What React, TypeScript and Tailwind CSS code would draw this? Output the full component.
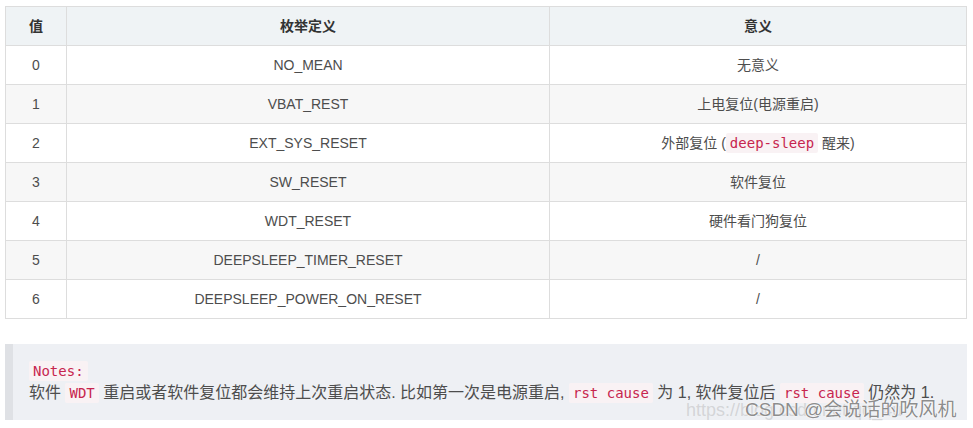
const rows = [
  { v: '0', name: 'NO_MEAN', desc: <>无意义</> },
  { v: '1', name: 'VBAT_REST', desc: <>上电复位(电源重启)</> },
  {
    v: '2',
    name: 'EXT_SYS_RESET',
    desc: (
      <>
        外部复位 (<Code>deep-sleep</Code> 醒来)
      </>
    ),
  },
  { v: '3', name: 'SW_RESET', desc: <>软件复位</> },
  { v: '4', name: 'WDT_RESET', desc: <>硬件看门狗复位</> },
  { v: '5', name: 'DEEPSLEEP_TIMER_RESET', desc: <>/</> },
  { v: '6', name: 'DEEPSLEEP_POWER_ON_RESET', desc: <>/</> },
];

function Code({ children }: { children: React.ReactNode }) {
  return (
    <code
      className="bg-[#f9f2f4] text-[#c7254e] px-[4px] py-[2px] rounded-[2px] text-[14px]"
      style={{ fontFamily: '"DejaVu Sans Mono", "Liberation Mono", monospace' }}
    >
      {children}
    </code>
  );
}

const App = () => {
  return (
    <div
      className="w-[973px] h-[428px] bg-white text-[#4d4d4d] pt-[6px] px-[5px] relative overflow-hidden"
      style={{ fontFamily: '"Liberation Sans", Arial, "Noto Sans CJK SC", sans-serif' }}
    >
      {/* 表格 */}
      <table className="w-[962px] border-collapse text-[14px] table-fixed">
        <colgroup>
          <col className="w-[61px]" />
          <col className="w-[483px]" />
          <col />
        </colgroup>
        <thead>
          <tr className="bg-[#eff3f5] h-[39px]">
            <th className="border border-[#dddddd] font-bold text-[#333]">值</th>
            <th className="border border-[#dddddd] font-bold text-[#333]">枚举定义</th>
            <th className="border border-[#dddddd] font-bold text-[#333]">意义</th>
          </tr>
        </thead>
        <tbody>
          {rows.map((r, i) => (
            <tr key={r.v} className={`h-[39px] ${i % 2 === 1 ? 'bg-[#f7f7f7]' : 'bg-white'}`}>
              <td className="border border-[#dddddd] text-center">{r.v}</td>
              <td className="border border-[#dddddd] text-center">{r.name}</td>
              <td className="border border-[#dddddd] text-center">{r.desc}</td>
            </tr>
          ))}
        </tbody>
      </table>

      {/* Notes 引用块 */}
      <div className="mt-[25px] w-[962px] h-[76px] bg-[#eef0f4] border-l-[8px] border-[#dfe1e5] pl-[16px] pt-[16px] text-[16px] leading-[22px]">
        <div>
          <Code>Notes:</Code>
        </div>
        <div className="whitespace-nowrap">
          软件 <Code>WDT</Code> 重启或者软件复位都会维持上次重启状态. 比如第一次是电源重启, <Code>rst cause</Code> 为 1,
          软件复位后 <Code>rst cause</Code> 仍然为 1.
        </div>
      </div>

      {/* 水印 */}
      <div className="absolute left-[686px] top-[399px] text-[18px] leading-[22px] text-[rgba(170,170,170,0.4)] whitespace-nowrap">
        https://blog.csdn.net/qq_4u
      </div>
      <div
        className="absolute left-[745px] top-[398px] text-[19px] leading-[24px] text-[rgba(110,110,110,0.8)] whitespace-nowrap"
        style={{ textShadow: '0 0 2px #fff, 0 0 1px #fff' }}
      >
        CSDN @会说话的吹风机
      </div>
    </div>
  );
};

export default App;
